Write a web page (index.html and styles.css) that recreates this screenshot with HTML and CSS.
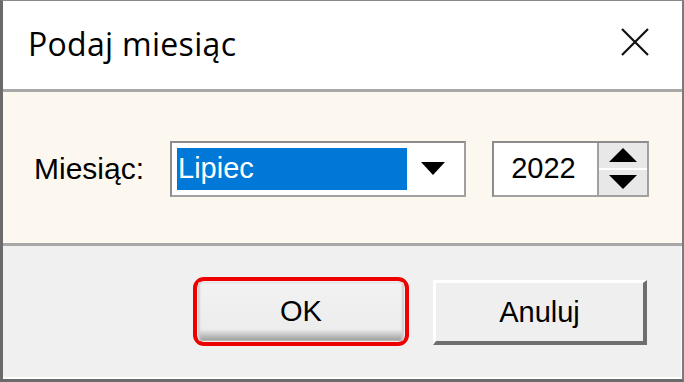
FILE: index.html
```html
<!DOCTYPE html>
<html lang="pl">
<head>
    <meta charset="UTF-8">
    <title>Podaj miesiąc</title>
    <link rel="stylesheet" href="styles.css">
</head>
<body>

    <div class="dialog">
        <!-- Title bar -->
        <div class="titlebar">
            <span class="title">Podaj miesiąc</span>
            <svg class="close" width="30" height="30" viewBox="0 0 30 30">
                <path d="M2 2 L28 28 M28 2 L2 28" stroke="#111" stroke-width="2.2" fill="none"/>
            </svg>
        </div>

        <!-- Month / year row -->
        <div class="panel">
            <span class="label">Miesiąc:</span>
            <div class="combo">
                <div class="combo-value">Lipiec</div>
                <svg class="combo-arrow" width="24" height="14" viewBox="0 0 24 14">
                    <polygon points="0,0 24,0 12,13" fill="#000"/>
                </svg>
            </div>
            <div class="spin">
                <div class="spin-value">2022</div>
                <div class="spin-buttons">
                    <div class="spin-btn">
                        <svg width="28" height="14" viewBox="0 0 28 14"><polygon points="0,14 28,14 14,0" fill="#000"/></svg>
                    </div>
                    <div class="spin-btn">
                        <svg width="28" height="14" viewBox="0 0 28 14"><polygon points="0,0 28,0 14,14" fill="#000"/></svg>
                    </div>
                </div>
            </div>
        </div>

        <!-- Buttons -->
        <div class="footer">
            <div class="ok-wrap">
                <button class="btn btn-ok">OK</button>
            </div>
            <button class="btn btn-cancel">Anuluj</button>
        </div>
    </div>

</body>
</html>
```

FILE: styles.css
```css
body {
    margin: 0;
    background-color: #ffffff;
    font-family: "Liberation Sans", Arial, sans-serif;
}

.dialog {
    width: 684px;
    height: 382px;
    box-sizing: border-box;
    border-top: 1px solid #8a8a8a;
    border-left: 3px solid #6a6a6a;
    border-right: 2px solid #7a7a7a;
    border-bottom: 3px solid #6a6a6a;
    display: flex;
    flex-direction: column;
    background: #ffffff;
}

/* Title bar */
.titlebar {
    height: 88px;
    display: flex;
    align-items: center;
    justify-content: space-between;
    padding: 0 32px 0 25px;
    border-bottom: 3px solid #a8a8a8;
    background: #ffffff;
}

.title {
    font-family: "Open Sans", "Noto Sans", sans-serif;
    font-size: 32px;
    letter-spacing: 0.3px;
    color: #000;
    margin-top: -4px;
}

.close {
    margin-top: -6px;
}

/* Panel */
.panel {
    height: 154px;
    background-color: #fdf8ef;
    border-bottom: 3px solid #a8a8a8;
    display: flex;
    align-items: center;
    padding-left: 31px;
    box-sizing: border-box;
}

.label {
    font-size: 30px;
    color: #000;
    width: 136px;
    margin-top: 2px;
}

.combo {
    width: 296px;
    height: 56px;
    box-sizing: border-box;
    border: 2px solid #8c8c8c;
    border-right-color: #a0a0a0;
    border-bottom-color: #a0a0a0;
    background: #ffffff;
    display: flex;
    align-items: center;
    padding: 5px;
    margin-top: 2px;
}

.combo-value {
    width: 230px;
    height: 100%;
    background-color: #0078d7;
    color: #ffffff;
    font-size: 29px;
    display: flex;
    align-items: center;
    padding-left: 1px;
    box-sizing: border-box;
}

.combo-arrow {
    margin-left: 14px;
}

.spin {
    margin-left: 26px;
    width: 157px;
    height: 56px;
    box-sizing: border-box;
    border: 2px solid #8c8c8c;
    border-right-color: #a0a0a0;
    border-bottom-color: #a0a0a0;
    background: #ffffff;
    display: flex;
    margin-top: 2px;
}

.spin-value {
    flex: 1;
    font-size: 29px;
    display: flex;
    align-items: center;
    justify-content: center;
    padding-right: 4px;
    border-right: 2px solid #a0a0a0;
}

.spin-buttons {
    width: 48px;
    display: flex;
    flex-direction: column;
    background: #e8e8e8;
}

.spin-btn {
    flex: 1;
    display: flex;
    align-items: center;
    justify-content: center;
}

.spin-btn + .spin-btn {
    border-top: 2px solid #ffffff;
}

/* Footer */
.footer {
    flex: 1;
    background-color: #f0f0f0;
    display: flex;
    align-items: center;
    justify-content: flex-end;
    padding-right: 34px;
    gap: 24px;
    border-bottom: 2px solid #ffffff;
    border-right: 1px solid #ffffff;
}

.ok-wrap {
    border: 4px solid #ee0000;
    border-radius: 11px;
    padding: 1px;
}

.btn {
    font-family: "Liberation Sans", Arial, sans-serif;
    font-size: 29px;
    color: #000;
    height: 62px;
    box-sizing: border-box;
    cursor: pointer;
}

.btn-ok {
    width: 206px;
    height: 59px;
    border: none;
    border-radius: 3px;
    background: linear-gradient(#f2f2f2 0%, #ededed 80%, #9a9a9a 100%);
    box-shadow: inset 2px 0 2px #d0d0d0, inset -2px 0 2px #d0d0d0;
}

.btn-cancel {
    width: 214px;
    height: 65px;
    background: #efefef;
    border-top: 3px solid #ffffff;
    border-left: 3px solid #ffffff;
    border-right: 4px solid #6e6e6e;
    border-bottom: 4px solid #6e6e6e;
    margin-top: 2px;
}
```
